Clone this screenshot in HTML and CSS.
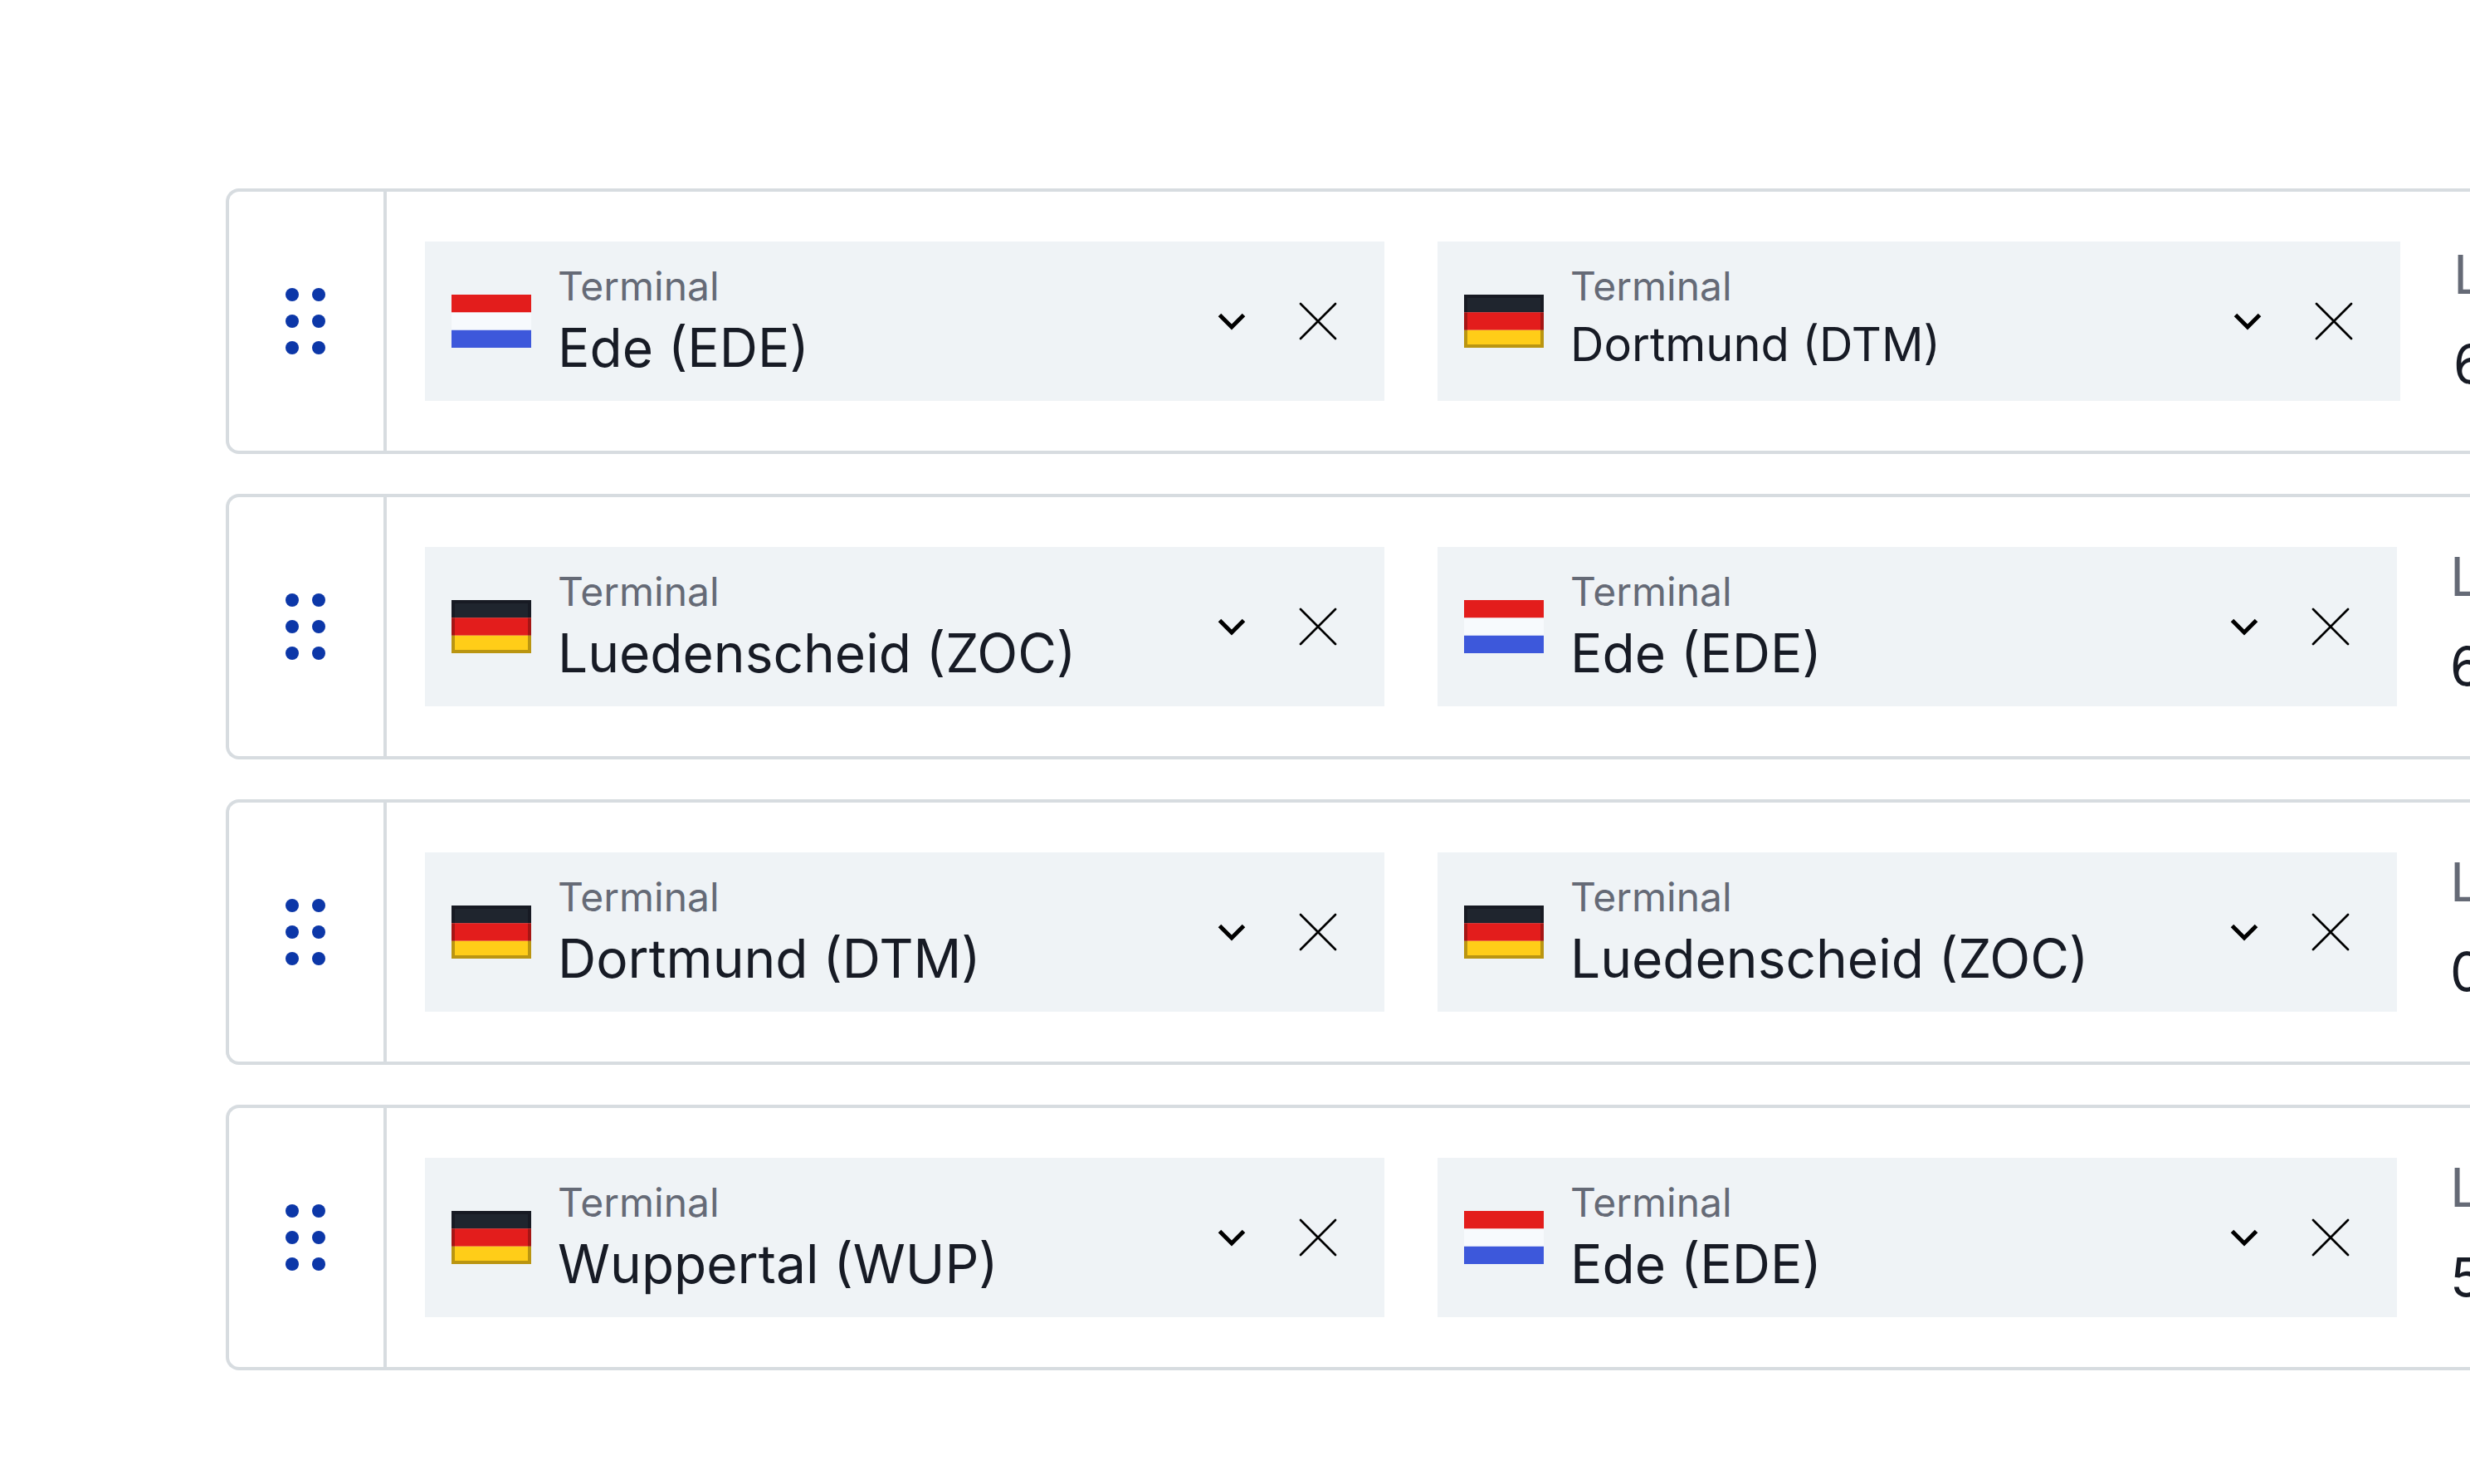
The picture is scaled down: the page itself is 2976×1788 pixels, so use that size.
FILE: index.html
```html
<!DOCTYPE html>
<html lang="en">
<head>
<meta charset="utf-8">
<title>Terminal routes</title>
<link rel="stylesheet" href="styles.css">
</head>
<body>
<svg class="defs" aria-hidden="true">
  <symbol id="dots" viewBox="0 0 48 80"><circle cx="8" cy="8" r="8"/><circle cx="40" cy="8" r="8"/><circle cx="8" cy="40" r="8"/><circle cx="40" cy="40" r="8"/><circle cx="8" cy="72" r="8"/><circle cx="40" cy="72" r="8"/></symbol>
  <symbol id="nl" viewBox="0 0 96 64"><path fill="#f7fafd" d="M0 0h96v64H0z"/><path fill="#e31d1c" d="M0 0h96v21.300H0z"/><path fill="#3d58db" d="M0 42.700h96V64H0z"/></symbol>
  <symbol id="de" viewBox="0 0 96 64"><path fill="#171a23" d="M0 0h96v21.300H0z"/><path fill="#1f252e" d="M4 4h88v17.300H4z"/><path fill="#e31d1c" d="M0 21.300h96v21.400H0z"/><path fill="#ffcd18" d="M0 42.700h96V64H0z"/><path fill="#000" fill-opacity=".27" d="M0 21.300h4V60h88V21.300h4V64H0z"/></symbol>
  <symbol id="chevron" viewBox="0 0 64 64"><path d="M17.500 24.500 32 39l14.500-14.500" fill="none" stroke="#000" stroke-width="5"/></symbol>
  <symbol id="cross" viewBox="0 0 64 64"><path d="m11 11 42 42M53 11 11 53" fill="none" stroke="#000" stroke-width="2.700" stroke-linecap="round"/></symbol>
</svg>
<main class="routes">
  <section class="route route-shifted">
    <button class="handle" aria-label="Reorder"><svg class="dots"><use href="#dots"/></svg></button>
    <div class="body">
      <div class="field">
        <svg class="flag"><use href="#nl"/></svg>
        <div class="text"><label class="label" for="from1">Terminal</label><select class="value" id="from1"><option>Ede (EDE)</option></select></div>
        <svg class="icon"><use href="#chevron"/></svg>
        <button class="clear" aria-label="Clear"><svg class="icon"><use href="#cross"/></svg></button>
      </div>
      <div class="field">
        <svg class="flag"><use href="#de"/></svg>
        <div class="text"><label class="label" for="to1">Terminal</label><select class="value value-small" id="to1"><option>Dortmund (DTM)</option></select></div>
        <svg class="icon"><use href="#chevron"/></svg>
        <button class="clear" aria-label="Clear"><svg class="icon"><use href="#cross"/></svg></button>
      </div>
      <dl class="metric"><dt>L</dt><dd>6</dd></dl>
    </div>
  </section>
  <section class="route">
    <button class="handle" aria-label="Reorder"><svg class="dots"><use href="#dots"/></svg></button>
    <div class="body">
      <div class="field">
        <svg class="flag"><use href="#de"/></svg>
        <div class="text"><label class="label" for="from2">Terminal</label><select class="value" id="from2"><option>Luedenscheid (ZOC)</option></select></div>
        <svg class="icon"><use href="#chevron"/></svg>
        <button class="clear" aria-label="Clear"><svg class="icon"><use href="#cross"/></svg></button>
      </div>
      <div class="field">
        <svg class="flag"><use href="#nl"/></svg>
        <div class="text"><label class="label" for="to2">Terminal</label><select class="value" id="to2"><option>Ede (EDE)</option></select></div>
        <svg class="icon"><use href="#chevron"/></svg>
        <button class="clear" aria-label="Clear"><svg class="icon"><use href="#cross"/></svg></button>
      </div>
      <dl class="metric"><dt>L</dt><dd>6</dd></dl>
    </div>
  </section>
  <section class="route">
    <button class="handle" aria-label="Reorder"><svg class="dots"><use href="#dots"/></svg></button>
    <div class="body">
      <div class="field">
        <svg class="flag"><use href="#de"/></svg>
        <div class="text"><label class="label" for="from3">Terminal</label><select class="value" id="from3"><option>Dortmund (DTM)</option></select></div>
        <svg class="icon"><use href="#chevron"/></svg>
        <button class="clear" aria-label="Clear"><svg class="icon"><use href="#cross"/></svg></button>
      </div>
      <div class="field">
        <svg class="flag"><use href="#de"/></svg>
        <div class="text"><label class="label" for="to3">Terminal</label><select class="value" id="to3"><option>Luedenscheid (ZOC)</option></select></div>
        <svg class="icon"><use href="#chevron"/></svg>
        <button class="clear" aria-label="Clear"><svg class="icon"><use href="#cross"/></svg></button>
      </div>
      <dl class="metric"><dt>L</dt><dd>0</dd></dl>
    </div>
  </section>
  <section class="route">
    <button class="handle" aria-label="Reorder"><svg class="dots"><use href="#dots"/></svg></button>
    <div class="body">
      <div class="field">
        <svg class="flag"><use href="#de"/></svg>
        <div class="text"><label class="label" for="from4">Terminal</label><select class="value" id="from4"><option>Wuppertal (WUP)</option></select></div>
        <svg class="icon"><use href="#chevron"/></svg>
        <button class="clear" aria-label="Clear"><svg class="icon"><use href="#cross"/></svg></button>
      </div>
      <div class="field">
        <svg class="flag"><use href="#nl"/></svg>
        <div class="text"><label class="label" for="to4">Terminal</label><select class="value" id="to4"><option>Ede (EDE)</option></select></div>
        <svg class="icon"><use href="#chevron"/></svg>
        <button class="clear" aria-label="Clear"><svg class="icon"><use href="#cross"/></svg></button>
      </div>
      <dl class="metric"><dt>L</dt><dd>5</dd></dl>
    </div>
  </section>
</main>
</body>
</html>
```

FILE: styles.css
```css
* { box-sizing: border-box; }
body {
  margin: 0;
  background: #fff;
  color: #171b25;
  font-family: Inter, "Liberation Sans", sans-serif;
}
button {
  padding: 0;
  border: 0;
  background: none;
  cursor: pointer;
}
svg { display: block; flex: none; }
.defs { position: absolute; width: 0; height: 0; }

.routes {
  display: flex;
  flex-direction: column;
  gap: 48px;
  padding: 227px 0 64px 272px;
}
.route {
  display: flex;
  border: 4px solid #d7dce0;
  border-right: 0;
  border-radius: 16px 0 0 16px;
  overflow: hidden;
}
.handle {
  display: flex;
  flex: none;
  align-items: center;
  justify-content: center;
  width: 190px;
  padding-right: 2px;
  border-right: 4px solid #d7dce0;
  cursor: grab;
}
.dots { width: 48px; height: 80px; fill: #0c37a8; }

.body {
  display: grid;
  flex: 1;
  grid-template-columns: minmax(0, 1fr) minmax(0, 1fr) 24px;
  column-gap: 64px;
  align-items: start;
  padding: 60px 0 60px 46px;
}
.field {
  display: flex;
  align-items: center;
  height: 192px;
  padding: 0 48px 0 32px;
  background: #eff3f6;
}
.flag { width: 96px; height: 64px; margin-right: 32px; }
.text {
  display: flex;
  flex: 1;
  flex-direction: column;
  align-self: flex-start;
  align-items: stretch;
  min-width: 0;
  padding-top: 22px;
}
.label {
  color: #656a76;
  font-size: 48px;
  line-height: 64px;
}
.value {
  appearance: none;
  width: 100%;
  height: 84px;
  margin: 0;
  padding: 0;
  border: 0;
  background: none;
  color: inherit;
  font-family: inherit;
  font-size: 64px;
  line-height: 84px;
}
.value-small { height: 76px; font-size: 56px; line-height: 76px; }
.icon { width: 64px; height: 64px; }
.clear { margin-left: 40px; }

.metric {
  display: flex;
  flex-direction: column;
  gap: 28px;
  margin: -4px 0 0;
  font-size: 64px;
  line-height: 80px;
}
.metric dt { color: #656a76; }
.metric dd { margin: 0; }

.route-shifted .field:nth-child(2) { margin-right: -4px; }
.route-shifted .metric { margin-top: 0; padding-left: 4px; }
```
